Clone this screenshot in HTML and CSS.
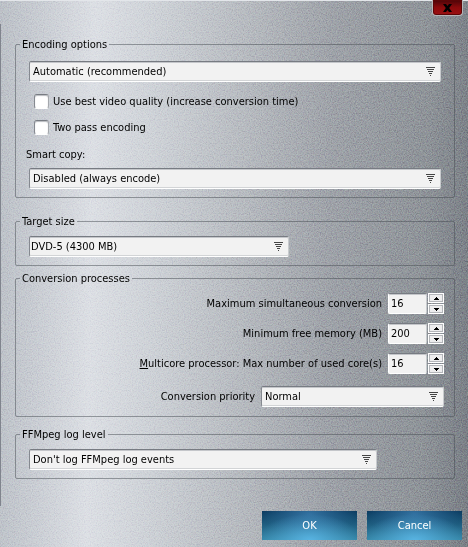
FILE: index.html
```html
<!DOCTYPE html>
<html lang="en">
<head>
    <meta charset="UTF-8">
    <meta name="viewport" content="width=device-width, initial-scale=1.0">
    <title>Encoding options</title>
    <link rel="stylesheet" href="styles.css">
</head>

<body>
    <!-- brushed metal grain -->
    <svg class="grain" aria-hidden="true">
        <filter id="noise" x="0" y="0" width="100%" height="100%" color-interpolation-filters="sRGB">
            <feTurbulence type="fractalNoise" baseFrequency="0.83" numOctaves="3" seed="4"/>
            <feColorMatrix type="saturate" values="0.3"/>
            <feComponentTransfer>
                <feFuncR type="linear" slope="2" intercept="-0.5"/>
                <feFuncG type="linear" slope="2" intercept="-0.5"/>
                <feFuncB type="linear" slope="2" intercept="-0.5"/>
                <feFuncA type="linear" slope="0" intercept="1"/>
            </feComponentTransfer>
        </filter>
        <rect width="100%" height="100%" filter="url(#noise)"/>
    </svg>

    <form class="dialog">
        <header class="titlebar">
            <button class="close" type="button" aria-label="Close">
                <svg width="9" height="8" viewBox="0 0 9 8"><path d="M0 0h3l1.500 2L6 0h3L6.200 4 9 8H6L4.500 6 3 8H0l2.800-4z"/></svg>
            </button>
        </header>

        <main class="content">
            <!-- Encoding -->
            <fieldset class="group">
                <legend>Encoding options</legend>
                <div class="group-body encoding">
                    <div class="select">
                        <select aria-label="Encoding mode"><option>Automatic (recommended)</option></select>
                        <svg class="arrow" viewBox="0 0 9 9"><path d="M0 0h9v1H0zM1 2h7v1H1zM2 4h5v1H2zM3 6h3v1H3zM4 8h1v1H4z"/></svg>
                    </div>
                    <div class="checks">
                        <label class="check"><input type="checkbox">Use best video quality (increase conversion time)</label>
                        <label class="check"><input type="checkbox">Two pass encoding</label>
                    </div>
                    <label class="copy-label" for="smartCopy">Smart copy:</label>
                    <div class="select">
                        <select id="smartCopy"><option>Disabled (always encode)</option></select>
                        <svg class="arrow" viewBox="0 0 9 9"><path d="M0 0h9v1H0zM1 2h7v1H1zM2 4h5v1H2zM3 6h3v1H3zM4 8h1v1H4z"/></svg>
                    </div>
                </div>
            </fieldset>

            <!-- Target size -->
            <fieldset class="group target">
                <legend>Target size</legend>
                <div class="group-body">
                    <div class="select size">
                        <select aria-label="Target size"><option>DVD-5 (4300 MB)</option></select>
                        <svg class="arrow" viewBox="0 0 9 9"><path d="M0 0h9v1H0zM1 2h7v1H1zM2 4h5v1H2zM3 6h3v1H3zM4 8h1v1H4z"/></svg>
                    </div>
                </div>
            </fieldset>

            <!-- Conversion -->
            <fieldset class="group conversion">
                <legend>Conversion processes</legend>
                <div class="group-body rows">
                    <div class="row">
                        <label for="maxConv">Maximum simultaneous conversion</label>
                        <div class="spin">
                            <input id="maxConv" type="text" inputmode="numeric" value="16">
                            <div class="spin-buttons">
                                <button type="button" aria-label="Increase"><svg viewBox="0 0 5 3"><path d="M2 0h1v1h1v1h1v1H0V2h1V1h1z"/></svg></button>
                                <button type="button" aria-label="Decrease"><svg viewBox="0 0 5 3"><path d="M0 0h5v1H4v1H3v1H2V2H1V1H0z"/></svg></button>
                            </div>
                        </div>
                    </div>
                    <div class="row">
                        <label for="minMem">Minimum free memory (MB)</label>
                        <div class="spin">
                            <input id="minMem" type="text" inputmode="numeric" value="200">
                            <div class="spin-buttons">
                                <button type="button" aria-label="Increase"><svg viewBox="0 0 5 3"><path d="M2 0h1v1h1v1h1v1H0V2h1V1h1z"/></svg></button>
                                <button type="button" aria-label="Decrease"><svg viewBox="0 0 5 3"><path d="M0 0h5v1H4v1H3v1H2V2H1V1H0z"/></svg></button>
                            </div>
                        </div>
                    </div>
                    <div class="row">
                        <label for="cores"><u>M</u>ulticore processor: Max number of used core(s)</label>
                        <div class="spin">
                            <input id="cores" type="text" inputmode="numeric" value="16">
                            <div class="spin-buttons">
                                <button type="button" aria-label="Increase"><svg viewBox="0 0 5 3"><path d="M2 0h1v1h1v1h1v1H0V2h1V1h1z"/></svg></button>
                                <button type="button" aria-label="Decrease"><svg viewBox="0 0 5 3"><path d="M0 0h5v1H4v1H3v1H2V2H1V1H0z"/></svg></button>
                            </div>
                        </div>
                    </div>
                    <div class="row priority">
                        <label for="priority">Conversion priority</label>
                        <div class="select">
                            <select id="priority"><option>Normal</option></select>
                            <svg class="arrow" viewBox="0 0 9 9"><path d="M0 0h9v1H0zM1 2h7v1H1zM2 4h5v1H2zM3 6h3v1H3zM4 8h1v1H4z"/></svg>
                        </div>
                    </div>
                </div>
            </fieldset>

            <!-- Log -->
            <fieldset class="group log">
                <legend>FFMpeg log level</legend>
                <div class="group-body">
                    <div class="select level">
                        <select aria-label="FFMpeg log level"><option>Don't log FFMpeg log events</option></select>
                        <svg class="arrow" viewBox="0 0 9 9"><path d="M0 0h9v1H0zM1 2h7v1H1zM2 4h5v1H2zM3 6h3v1H3zM4 8h1v1H4z"/></svg>
                    </div>
                </div>
            </fieldset>
        </main>

        <footer class="actions">
            <button class="btn" type="submit">OK</button>
            <button class="btn" type="button">Cancel</button>
        </footer>
    </form>
</body>

</html>
```

FILE: styles.css
```css
* {
    box-sizing: border-box;
}

body {
    margin: 0;
    min-height: 100vh;
    background: linear-gradient(91deg, #bcc1c7 0%, #c8ccd2 8%, #dcdfe4 20%, #cfd3d8 32%, #b7bbc0 52%, #9fa3a9 70%, #8f9499 90%, #7a7f86 100%);
    color: #000;
    font-family: Tahoma, "DejaVu Sans Condensed", "DejaVu Sans", sans-serif;
    font-size: 11px;
    line-height: 15px;
}

input, select, button {
    font: inherit;
    color: inherit;
    margin: 0;
}

.grain {
    position: absolute;
    top: 0;
    left: 0;
    width: 100%;
    height: 100%;
    z-index: -1;
    opacity: 0.4;
    mix-blend-mode: soft-light;
}

.dialog {
    border-top: 1px solid #e3e6ea;
}

/* title bar */
.titlebar {
    display: flex;
    justify-content: flex-end;
    height: 23px;
    padding-right: 5px;
}

.close {
    display: flex;
    justify-content: center;
    align-items: center;
    width: 31px;
    height: 16px;
    margin-top: -1px;
    padding: 0;
    border: 1px solid #b5b5b8;
    border-top: 0;
    border-radius: 0 0 4px 4px;
    background: linear-gradient(#4a0508, #8c0a0c 50%, #9c1012);
    box-shadow: inset 0 0 0 1px #5c0507;
}

/* groups */
.content {
    padding: 13px 13px 27px 14px;
    border-left: 1px solid #80848d;
}

.group {
    min-width: 0;
    margin: 0;
    padding: 0;
    border: 1px solid rgba(70, 75, 82, 0.5);
    border-radius: 2px;
}

.group legend {
    margin-left: 4px;
    padding: 0 2px;
}

.group-body {
    padding: 7px 13px 8px;
}

.encoding {
    padding-top: 9px;
}

.target {
    margin-top: 16px;
}

.conversion {
    margin-top: 5px;
}

.log {
    margin-top: 10px;
}

/* drop-downs */
.select {
    display: grid;
    align-items: center;
    height: 21px;
}

.select select,
.select .arrow {
    grid-area: 1 / 1;
}

.select select {
    appearance: none;
    width: 100%;
    height: 21px;
    padding: 0 20px 0 3px;
    border: 1px solid;
    border-color: #777b82 #c8cbce #fff #858990;
    border-radius: 2px;
    background: #f2f2f2;
    box-shadow: inset 0 1px #c4c6ca, inset 0 -1px #d2d4d6;
}

.arrow {
    justify-self: end;
    width: 9px;
    height: 9px;
    margin-right: 6px;
    fill: #444;
    pointer-events: none;
}

.size {
    width: 63%;
}

.size select {
    padding-left: 1px;
}

.level {
    margin-right: 64px;
}

/* tick boxes */
.checks {
    padding: 6px 5px 7px;
}

.check {
    display: flex;
    align-items: center;
    gap: 4px;
    height: 26px;
}

.check input {
    appearance: none;
    width: 15px;
    height: 15px;
    border: 1px solid;
    border-color: #777b82 #a5a8ad #fff #858990;
    border-radius: 3px;
    background: #fff;
    box-shadow: inset 0 1px 1px #b9bbbf;
}

.copy-label {
    display: block;
    margin: 0 0 6px -3px;
}

/* conversion rows */
.rows {
    display: flex;
    flex-direction: column;
    gap: 9px;
    padding-right: 10px;
    padding-bottom: 9px;
}

.row {
    display: flex;
    justify-content: flex-end;
    align-items: center;
    gap: 6px;
    height: 21px;
}

.priority {
    margin-top: 3px;
}

.priority .select {
    width: 183px;
}

.spin {
    display: flex;
    gap: 1px;
}

.spin input {
    width: 39px;
    height: 21px;
    padding: 0 2px;
    border: 1px solid;
    border-color: #777b82 #c8cbce #fff #fff;
    border-radius: 2px;
    background: #f2f2f2;
    box-shadow: inset 0 1px #c4c6ca;
}

.spin-buttons {
    display: flex;
    flex-direction: column;
    gap: 1px;
}

.spin-buttons button {
    display: flex;
    justify-content: center;
    align-items: center;
    width: 16px;
    height: 10px;
    padding: 0;
    border: 1px solid #fff;
    background: #ededee;
    box-shadow: inset 0 0 0 1px #b4b6ba;
}

.spin-buttons svg {
    width: 5px;
    height: 3px;
}

/* bottom buttons */
.actions {
    display: flex;
    justify-content: flex-end;
    gap: 10px;
    padding: 5px 6px 7px;
}

.btn {
    width: 95px;
    height: 29px;
    padding: 0;
    border: 0;
    background:
        radial-gradient(ellipse 55% 90% at 50% 100%, rgba(92, 184, 232, 0.9), rgba(92, 184, 232, 0)),
        radial-gradient(ellipse 50% 80% at 50% 10%, rgba(60, 125, 175, 0.8), rgba(60, 125, 175, 0)),
        linear-gradient(#0b3b60, #3586a6);
    color: #fff;
}
```
